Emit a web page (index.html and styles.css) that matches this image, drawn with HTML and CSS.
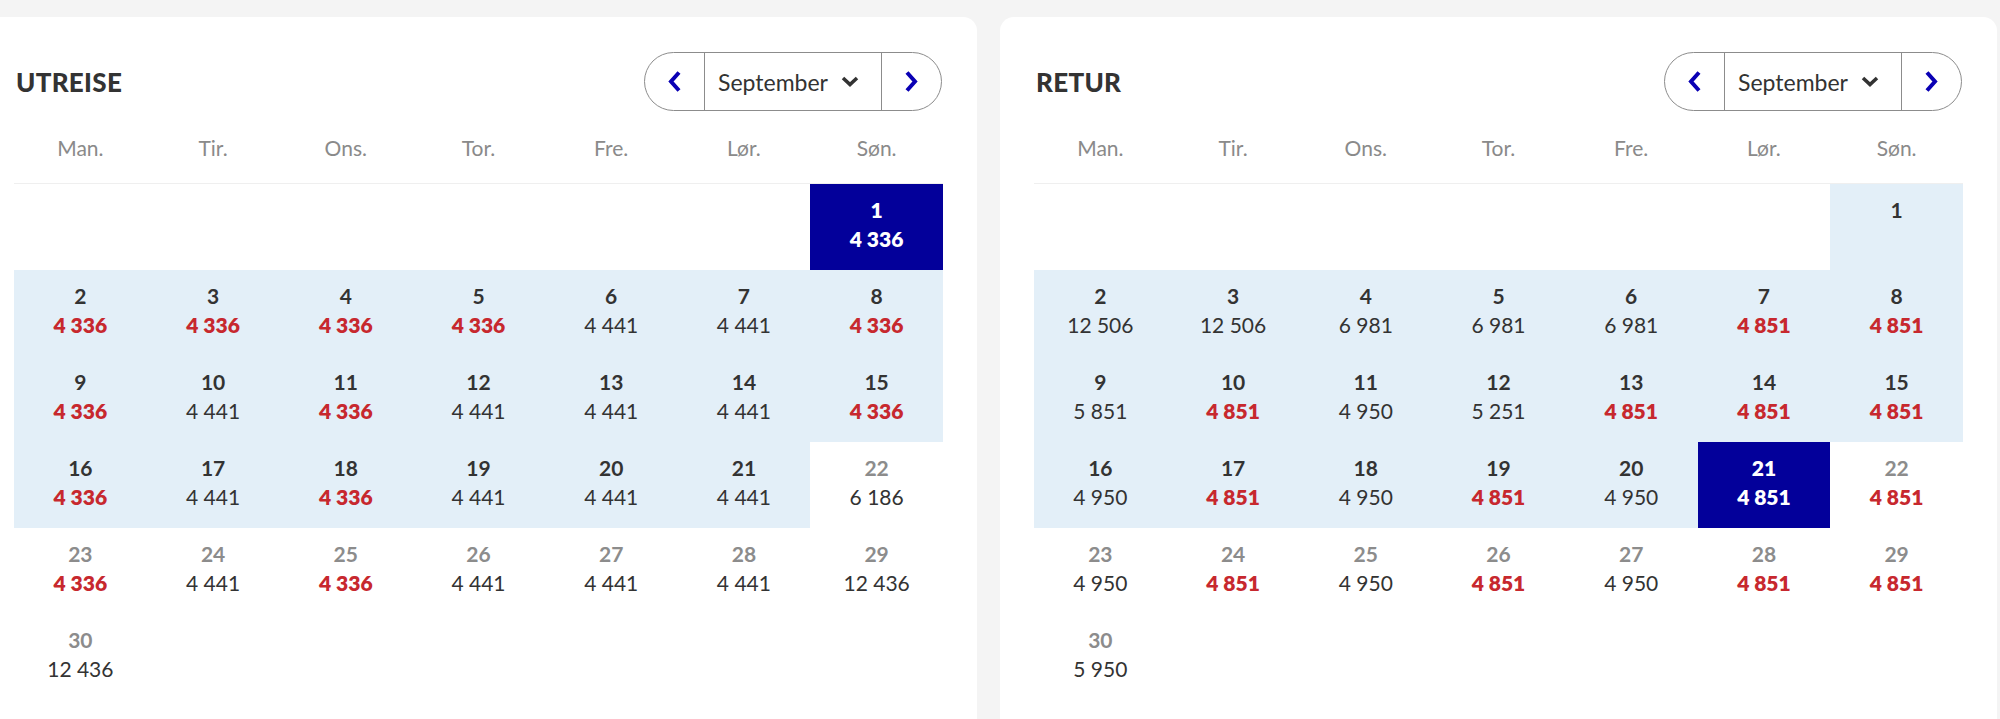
FILE: index.html
```html
<!DOCTYPE html>
<html lang="no">
<head>
<meta charset="utf-8">
<title>Kalender</title>
<link rel="stylesheet" href="styles.css">
</head>
<body>
<div class="wrap">
  <section class="card card-left">
    <div class="card-head">
      <h2 class="title">UTREISE</h2>
      <div class="pill">
        <button class="nav"><svg width="15" height="23" viewBox="0 0 15 23"><polyline points="12,2.5 4,11.5 12,20.5" fill="none" stroke="#0a00b4" stroke-width="4"/></svg></button>
        <div class="month"><span>September</span><svg width="18" height="11" viewBox="0 0 18 11"><polyline points="2,2 9,8.5 16,2" fill="none" stroke="#333" stroke-width="3.6"/></svg></div>
        <button class="nav"><svg width="15" height="23" viewBox="0 0 15 23"><polyline points="3,2.5 11,11.5 3,20.5" fill="none" stroke="#0a00b4" stroke-width="4"/></svg></button>
      </div>
    </div>
    <div class="weekdays">
      <span>Man.</span><span>Tir.</span><span>Ons.</span><span>Tor.</span><span>Fre.</span><span>Lør.</span><span>Søn.</span>
    </div>
    <div class="days">
      <div class="cell"></div><div class="cell"></div><div class="cell"></div><div class="cell"></div><div class="cell"></div><div class="cell"></div>
      <div class="cell sel"><span class="d">1</span><span class="p low">4 336</span></div>
      <div class="cell rng"><span class="d">2</span><span class="p low">4 336</span></div>
      <div class="cell rng"><span class="d">3</span><span class="p low">4 336</span></div>
      <div class="cell rng"><span class="d">4</span><span class="p low">4 336</span></div>
      <div class="cell rng"><span class="d">5</span><span class="p low">4 336</span></div>
      <div class="cell rng"><span class="d">6</span><span class="p">4 441</span></div>
      <div class="cell rng"><span class="d">7</span><span class="p">4 441</span></div>
      <div class="cell rng"><span class="d">8</span><span class="p low">4 336</span></div>
      <div class="cell rng"><span class="d">9</span><span class="p low">4 336</span></div>
      <div class="cell rng"><span class="d">10</span><span class="p">4 441</span></div>
      <div class="cell rng"><span class="d">11</span><span class="p low">4 336</span></div>
      <div class="cell rng"><span class="d">12</span><span class="p">4 441</span></div>
      <div class="cell rng"><span class="d">13</span><span class="p">4 441</span></div>
      <div class="cell rng"><span class="d">14</span><span class="p">4 441</span></div>
      <div class="cell rng"><span class="d">15</span><span class="p low">4 336</span></div>
      <div class="cell rng"><span class="d">16</span><span class="p low">4 336</span></div>
      <div class="cell rng"><span class="d">17</span><span class="p">4 441</span></div>
      <div class="cell rng"><span class="d">18</span><span class="p low">4 336</span></div>
      <div class="cell rng"><span class="d">19</span><span class="p">4 441</span></div>
      <div class="cell rng"><span class="d">20</span><span class="p">4 441</span></div>
      <div class="cell rng"><span class="d">21</span><span class="p">4 441</span></div>
      <div class="cell out"><span class="d">22</span><span class="p">6 186</span></div>
      <div class="cell out"><span class="d">23</span><span class="p low">4 336</span></div>
      <div class="cell out"><span class="d">24</span><span class="p">4 441</span></div>
      <div class="cell out"><span class="d">25</span><span class="p low">4 336</span></div>
      <div class="cell out"><span class="d">26</span><span class="p">4 441</span></div>
      <div class="cell out"><span class="d">27</span><span class="p">4 441</span></div>
      <div class="cell out"><span class="d">28</span><span class="p">4 441</span></div>
      <div class="cell out"><span class="d">29</span><span class="p">12 436</span></div>
      <div class="cell out"><span class="d">30</span><span class="p">12 436</span></div>
    </div>
  </section>

  <section class="card card-right">
    <div class="card-head">
      <h2 class="title">RETUR</h2>
      <div class="pill">
        <button class="nav"><svg width="15" height="23" viewBox="0 0 15 23"><polyline points="12,2.5 4,11.5 12,20.5" fill="none" stroke="#0a00b4" stroke-width="4"/></svg></button>
        <div class="month"><span>September</span><svg width="18" height="11" viewBox="0 0 18 11"><polyline points="2,2 9,8.5 16,2" fill="none" stroke="#333" stroke-width="3.6"/></svg></div>
        <button class="nav"><svg width="15" height="23" viewBox="0 0 15 23"><polyline points="3,2.5 11,11.5 3,20.5" fill="none" stroke="#0a00b4" stroke-width="4"/></svg></button>
      </div>
    </div>
    <div class="weekdays">
      <span>Man.</span><span>Tir.</span><span>Ons.</span><span>Tor.</span><span>Fre.</span><span>Lør.</span><span>Søn.</span>
    </div>
    <div class="days">
      <div class="cell"></div><div class="cell"></div><div class="cell"></div><div class="cell"></div><div class="cell"></div><div class="cell"></div>
      <div class="cell rng"><span class="d">1</span></div>
      <div class="cell rng"><span class="d">2</span><span class="p">12 506</span></div>
      <div class="cell rng"><span class="d">3</span><span class="p">12 506</span></div>
      <div class="cell rng"><span class="d">4</span><span class="p">6 981</span></div>
      <div class="cell rng"><span class="d">5</span><span class="p">6 981</span></div>
      <div class="cell rng"><span class="d">6</span><span class="p">6 981</span></div>
      <div class="cell rng"><span class="d">7</span><span class="p low">4 851</span></div>
      <div class="cell rng"><span class="d">8</span><span class="p low">4 851</span></div>
      <div class="cell rng"><span class="d">9</span><span class="p">5 851</span></div>
      <div class="cell rng"><span class="d">10</span><span class="p low">4 851</span></div>
      <div class="cell rng"><span class="d">11</span><span class="p">4 950</span></div>
      <div class="cell rng"><span class="d">12</span><span class="p">5 251</span></div>
      <div class="cell rng"><span class="d">13</span><span class="p low">4 851</span></div>
      <div class="cell rng"><span class="d">14</span><span class="p low">4 851</span></div>
      <div class="cell rng"><span class="d">15</span><span class="p low">4 851</span></div>
      <div class="cell rng"><span class="d">16</span><span class="p">4 950</span></div>
      <div class="cell rng"><span class="d">17</span><span class="p low">4 851</span></div>
      <div class="cell rng"><span class="d">18</span><span class="p">4 950</span></div>
      <div class="cell rng"><span class="d">19</span><span class="p low">4 851</span></div>
      <div class="cell rng"><span class="d">20</span><span class="p">4 950</span></div>
      <div class="cell sel"><span class="d">21</span><span class="p low">4 851</span></div>
      <div class="cell out"><span class="d">22</span><span class="p low">4 851</span></div>
      <div class="cell out"><span class="d">23</span><span class="p">4 950</span></div>
      <div class="cell out"><span class="d">24</span><span class="p low">4 851</span></div>
      <div class="cell out"><span class="d">25</span><span class="p">4 950</span></div>
      <div class="cell out"><span class="d">26</span><span class="p low">4 851</span></div>
      <div class="cell out"><span class="d">27</span><span class="p">4 950</span></div>
      <div class="cell out"><span class="d">28</span><span class="p low">4 851</span></div>
      <div class="cell out"><span class="d">29</span><span class="p low">4 851</span></div>
      <div class="cell out"><span class="d">30</span><span class="p">5 950</span></div>
    </div>
  </section>
</div>
</body>
</html>
```

FILE: styles.css
```css
html, body {
  margin: 0;
  padding: 0;
  background: #f4f4f4;
  height: 100%;
  overflow: hidden;
}

body {
  font-family: Lato, "Open Sans", "Liberation Sans", sans-serif;
  color: #333;
}

.wrap {
  display: flex;
  gap: 23px;
  padding-top: 17px;
  margin-left: -20px;
}

.card {
  flex: 0 0 997px;
  box-sizing: border-box;
  height: 702px;
  padding: 35px 34px 0;
  background: #fff;
  border-radius: 14px 14px 0 0;
  overflow: hidden;
}

.card-head {
  display: flex;
  align-items: center;
  justify-content: space-between;
  height: 59px;
}

.title {
  margin: 0 0 0 2px;
  font-size: 26px;
  font-weight: 900;
  letter-spacing: 0.3px;
  color: #333;
}

.pill {
  display: flex;
  box-sizing: border-box;
  width: 298px;
  height: 59px;
  margin-right: 1px;
  border: 1.5px solid #8c8c8c;
  border-radius: 30px;
  overflow: hidden;
}

.nav {
  flex: 0 0 59px;
  display: flex;
  align-items: center;
  justify-content: center;
  border: 0;
  padding: 0;
  background: transparent;
}

.month {
  flex: 1;
  display: flex;
  align-items: center;
  justify-content: space-between;
  padding: 0 22px 0 13px;
  border-left: 1.5px solid #8c8c8c;
  border-right: 1.5px solid #8c8c8c;
  font-size: 23px;
  color: #333;
}

.weekdays {
  display: grid;
  grid-template-columns: repeat(7, 1fr);
  align-items: center;
  height: 72px;
  border-bottom: 1px solid #efefef;
  font-size: 21px;
  color: #8a8a8a;
  text-align: center;
}

.days {
  display: grid;
  grid-template-columns: repeat(7, 1fr);
  grid-auto-rows: 86px;
}

.cell {
  display: flex;
  flex-direction: column;
  align-items: center;
  box-sizing: border-box;
  padding-top: 11px;
  font-size: 21px;
  line-height: 29px;
}

.cell.rng {
  background: #e3eff8;
}

.cell.sel {
  background: #03009a;
  color: #fff;
}

.d {
  font-weight: 700;
  color: #333;
}

.p {
  color: #333;
  font-weight: 400;
}

.p.low {
  color: #c7282e;
  font-weight: 800;
}

.out .d {
  color: #8c8c8c;
}

.sel .d,
.sel .p,
.sel .p.low {
  color: #fff;
  font-weight: 800;
}
```
